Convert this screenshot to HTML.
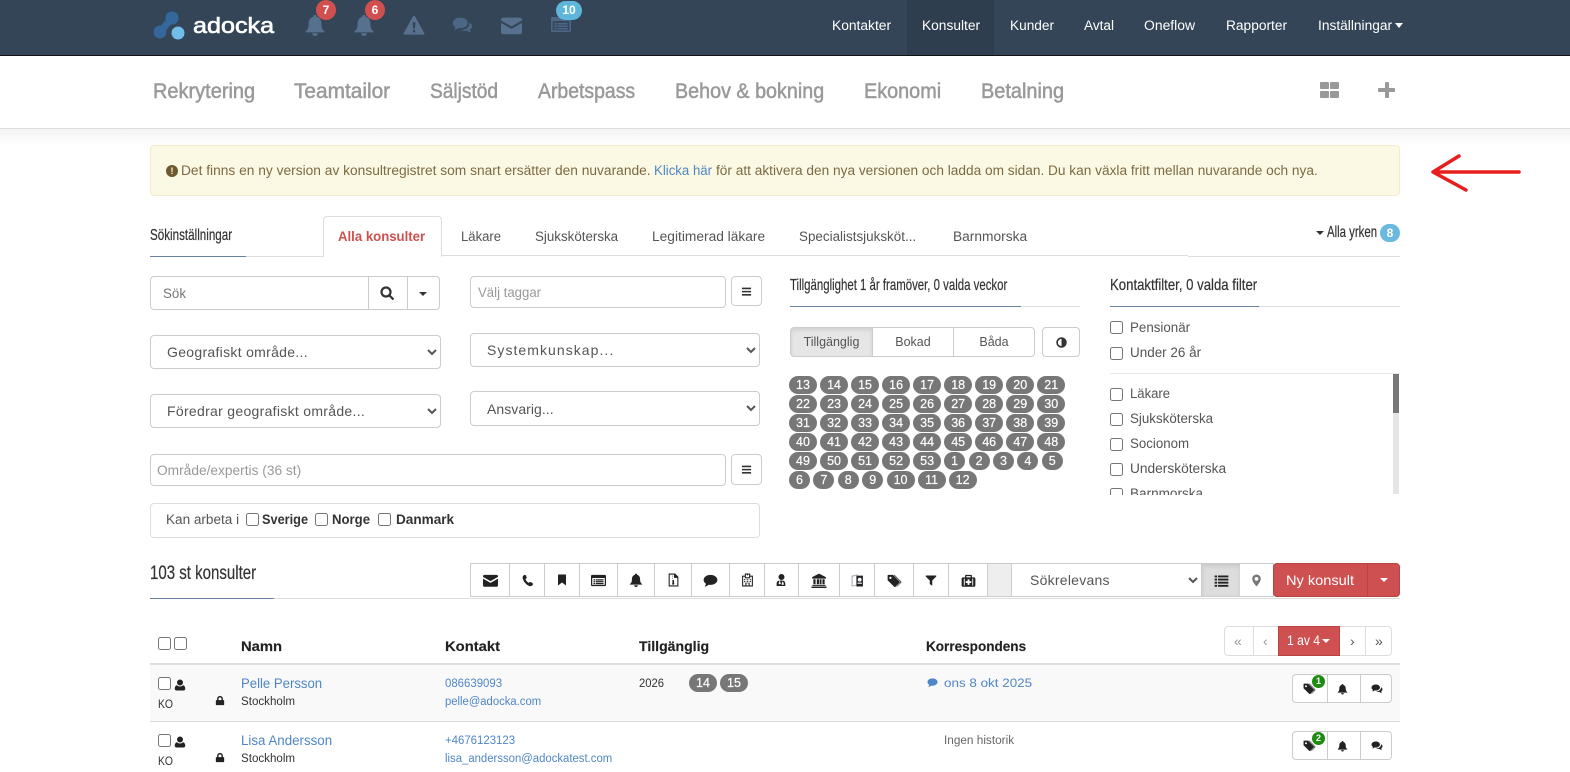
<!DOCTYPE html>
<html lang="sv"><head><meta charset="utf-8"><title>Konsulter</title>
<style>
*{box-sizing:border-box}
html,body{margin:0;padding:0;width:1570px;height:772px;overflow:hidden;background:#fff;font-family:"Liberation Sans",sans-serif;color:#555}
.a{position:absolute}
.t{position:absolute;white-space:nowrap;line-height:20px;height:20px;margin-top:1px;font-size:13.5px;transform-origin:0 50%}
.o{font-family:"Liberation Sans Narrow","Liberation Sans",sans-serif;color:#333;font-size:16px;-webkit-text-stroke:.2px #333}
.n{color:#fff;font-size:13.5px}
.s{color:#999;font-size:21px;-webkit-text-stroke:.5px #999}
.lk{color:#4f86c6}
.b{font-weight:700;color:#222;-webkit-text-stroke:.15px #222}
.box{position:absolute;border:1px solid #ccc;border-radius:4px;background:#fff}
.btn{position:absolute;border:1px solid #ccc;background:#fff;display:flex;align-items:center;justify-content:center}
svg.i{display:block;fill:currentColor}
select{position:absolute;border:1px solid #ccc;border-radius:4px;background:#fff;color:#555;font:14px "Liberation Sans",sans-serif;letter-spacing:.3px;padding:0 12px;margin:0}
input[type=checkbox]{position:absolute;margin:0;width:13px;height:13px}
.chips{position:absolute;display:flex;flex-wrap:wrap;left:789px;top:376px;width:290px}
.c{background:#777;color:#fff;font-size:12.5px;-webkit-text-stroke:.2px #fff;height:18px;line-height:18px;border-radius:10px;text-align:center;width:28px;margin:0 3.04px 1.03px 0}
.c.x{width:21px;margin-right:3.4px}
</style></head><body>
<svg width="0" height="0" style="position:absolute"><defs>
<symbol id="bell" viewBox="0 0 24 24"><path d="M12 1a2 2 0 0 0-2 2.200C6.500 4 5 7 5 11c0 4-1 6.500-3.500 8v1h21v-1C20 17.500 19 15 19 11c0-4-1.500-7-5-7.800A2 2 0 0 0 12 1zM9 21a3 3 0 0 0 6 0z"/></symbol>
<symbol id="warn" viewBox="0 0 24 24"><path fill-rule="evenodd" d="M12 2c.6 0 1 .3 1.300.8l10 18c.4.800-.1 1.700-1 1.700H1.700c-.9 0-1.400-.9-1-1.700l10-18C11 2.300 11.400 2 12 2zM10.500 9l.4 7h2.200l.4-7zM10.700 17.500v2.500h2.600v-2.500z"/></symbol>
<symbol id="coms" viewBox="0 0 24 24"><path d="M9.500 3C14.500 3 18 5.700 18 9s-3.500 6-8.500 6c-.8 0-1.500 0-2.300-.2C6 16 4.300 16.600 2.500 17c.7-1 1.200-2 1.300-3.300C2 12.600 1 10.900 1 9c0-3.300 3.800-6 8.500-6z"/><path d="M20 8.500c1.800 1 3 2.500 3 4.200 0 1.600-.9 3-2.500 4 0 1.300.5 2.300 1.300 3.300-1.800-.3-3.500-1-4.700-2.100-.7.100-1.400.2-2.100.2-1.900 0-3.600-.5-4.900-1.300 5.800.2 10.200-3.200 9.900-8.300z"/></symbol>
<symbol id="com" viewBox="0 0 24 24"><path d="M12 3c6.100 0 11 3.600 11 8s-4.900 8-11 8c-1 0-2-.1-3-.3C7.400 20.300 5 21.300 2.500 21.700c1.200-1.300 2-2.900 2.100-4.700C2.400 15.500 1 13.400 1 11c0-4.400 4.900-8 11-8z"/></symbol>
<symbol id="mail" viewBox="0 0 24 24"><path d="M2.500 3h19C22.900 3 24 4 24 5.500v.6L12 13 0 6.100v-.6C0 4 1.100 3 2.500 3zM0 9l12 6.800L24 9v10.500c0 1.400-1.100 2.500-2.500 2.500h-19C1.100 22 0 20.900 0 19.500z"/></symbol>
<symbol id="lalt" viewBox="0 0 24 24"><path fill-rule="evenodd" d="M2 3h20a2 2 0 0 1 2 2v14a2 2 0 0 1-2 2H2a2 2 0 0 1-2-2V5a2 2 0 0 1 2-2zM2 8v11h20V8zM4 10h3v2H4zM8 10h12v2H8zM4 13h3v2H4zM8 13h12v2H8zM4 16h3v2H4zM8 16h12v2H8z"/></symbol>
<symbol id="phone" viewBox="0 0 24 24"><path d="M6.500 1.500L9 2.300l1.800 5-2.600 2c.8 2.700 3 5.300 5.800 7l2.500-1.800 5 2 .5 3.200c-1 1.800-3 2.800-5 2.800C10.500 21.500 3 13 3 6c0-2 1.500-3.800 3.500-4.500z"/></symbol>
<symbol id="book" viewBox="0 0 24 24"><path d="M4 1h16v22l-8-6-8 6z"/></symbol>
<symbol id="zip" viewBox="0 0 24 24"><path fill-rule="evenodd" d="M3 0h12l6 6v18H3zM5 2v20h14V8h-6V2h-1v2h-2v2h2v2h-2v2h2v2h-2v5.500a2 2 0 1 0 3 0V12h-1v-2h-1V8h1V6h-1V4h1V2z"/></symbol>
<symbol id="hosp" viewBox="0 0 24 24"><path fill-rule="evenodd" d="M7 0h10v4h5v20H2V4h5zM9 2v5h6V2h-2v1.500h-2V2zM4 6v16h4v-5h8v5h4V6h-3v3H7V6zM5.500 10.500v2h2.500v-2zm5 0v2h3v-2zm5.500 0v2h2.500v-2zM5.500 14v2h2.500v-2zm5 0v2h3v-2zm5.500 0v2h2.500v-2zM10 18v4h4v-4z"/></symbol>
<symbol id="doc" viewBox="0 0 24 24"><path fill-rule="evenodd" d="M12 1a5.500 5.500 0 1 1 0 11 5.500 5.500 0 0 1 0-11zM3 23v-4c0-3.500 2-5.500 5-6v3.200a2 2 0 1 0 1.500 0V13h5v2.500c-1.300.4-2 1.500-2 3V21h3.500v-2.500c0-1.500-.7-2.600-2-3V13c3 .5 5 2.500 5 6v4z"/></symbol>
<symbol id="bank" viewBox="0 0 24 24"><path d="M12 1l11 5.500V9H1V6.500zM3 10h3.500v8H3zM8.500 10H12v8H8.500zM13 10h3v8h-3zM17.500 10H21v8h-3.500zM1.500 19h21v1.500h-21zM0 21.500h24V24H0z"/></symbol>
<symbol id="pass" viewBox="0 0 24 24"><path fill="#aab" d="M1 3l11-2v20L1 23zM3 5v16l7-1.300V3z"/><path fill-rule="evenodd" d="M10 3h12v20H10zm6 4a3.500 3.500 0 1 0 0 7 3.500 3.500 0 0 0 0-7zm-4 9v2h8v-2z"/></symbol>
<symbol id="tags" viewBox="0 0 24 24"><path fill-rule="evenodd" d="M1 4a1 1 0 0 1 1-1h7.500L20 13.500a1.500 1.500 0 0 1 0 2L13.500 22a1.500 1.500 0 0 1-2 0L1 11.500zM5.500 6a1.800 1.800 0 1 0 0 3.600 1.800 1.800 0 0 0 0-3.600z"/><path d="M12 3l10.500 10.500a1.500 1.500 0 0 1 0 2L16 22h-1l6-6.500a1.500 1.500 0 0 0 0-2L10.500 3z"/></symbol>
<symbol id="filt" viewBox="0 0 24 24"><path d="M1.500 2h21v2L14.500 12v10.500l-5-3.500v-7L1.500 4z"/></symbol>
<symbol id="med" viewBox="0 0 24 24"><path fill-rule="evenodd" d="M8 3h8a1.500 1.500 0 0 1 1.500 1.500V7h3A2.500 2.500 0 0 1 23 9.500v10a2.500 2.500 0 0 1-2.500 2.500h-17A2.500 2.500 0 0 1 1 19.500v-10A2.500 2.500 0 0 1 3.500 7h3V4.500A1.500 1.500 0 0 1 8 3zM8.500 5v2h7V5zM4.500 9v11h1.500V9zM18 9v11h1.500V9zM10.500 10v3h-3v3h3v3h3v-3h3v-3h-3v-3z"/></symbol>
<symbol id="list" viewBox="0 0 24 24"><path d="M1 4h4v3H1zM6.500 4H23v3H6.500zM1 9h4v3H1zM6.500 9H23v3H6.500zM1 14h4v3H1zM6.500 14H23v3H6.500zM1 19h4v3H1zM6.500 19H23v3H6.500z"/></symbol>
<symbol id="pin" viewBox="0 0 24 24"><path fill-rule="evenodd" d="M12 1a8 8 0 0 0-8 8c0 5 8 14 8 14s8-9 8-14a8 8 0 0 0-8-8zm0 4.500a3.500 3.500 0 1 1 0 7 3.500 3.500 0 0 1 0-7z"/></symbol>
<symbol id="user" viewBox="0 0 24 24"><path d="M12 1a6 6 0 1 1 0 12 6 6 0 0 1 0-12zM6 12.500C7.500 14 9.500 15 12 15s4.500-1 6-2.500c3 .5 4.500 3.500 4.500 7 0 2-1.500 3.500-3.500 3.500H5c-2 0-3.500-1.500-3.500-3.500 0-3.500 1.500-6.500 4.500-7z"/></symbol>
<symbol id="lock" viewBox="0 0 24 24"><path fill-rule="evenodd" d="M12 1a7 7 0 0 1 7 7v3h1.500c.8 0 1.500.7 1.500 1.500v9c0 .8-.7 1.500-1.500 1.500h-17C2.700 23 2 22.300 2 21.500v-9c0-.8.7-1.500 1.500-1.500H5V8a7 7 0 0 1 7-7zM8.500 11h7V8a3.500 3.500 0 0 0-7 0z"/></symbol>
<symbol id="bars" viewBox="0 0 24 24"><path d="M2 3.500h20v3.500H2zM2 10.500h20V14H2zM2 17.500h20V21H2z"/></symbol>
</defs></svg>

<!-- top nav -->
<div class="a" style="left:0;top:0;width:1568px;height:56px;background:#344557;border-bottom:1px solid #111"></div>
<div class="a" style="left:906px;top:0;width:87px;height:55px;background:#2f3e4f"></div>
<svg class="a" style="left:150px;top:8px" width="40" height="34"><path d="M22 10L10 24" stroke="#34689c" stroke-width="7"/><circle cx="22" cy="10" r="6.500" fill="#34689c"/><circle cx="10" cy="24" r="6.500" fill="#34689c"/><circle cx="28" cy="25" r="6.500" fill="#6fbde8"/></svg>
<div class="t" style="left:193px;top:14px;font-size:22px;color:#fff;-webkit-text-stroke:.6px #fff;line-height:22px;height:22px;--w:81">adocka</div>

<svg class="a i" style="left:304px;top:14px;color:#57708e" width="22" height="22"><use href="#bell"/></svg>
<div class="a" style="left:316px;top:0;width:20px;height:20px;border-radius:50%;background:#d14f4f;color:#fff;font:700 12px/20px 'Liberation Sans';text-align:center">7</div>
<svg class="a i" style="left:353px;top:14px;color:#57708e" width="22" height="22"><use href="#bell"/></svg>
<div class="a" style="left:365px;top:0;width:20px;height:20px;border-radius:50%;background:#d14f4f;color:#fff;font:700 12px/20px 'Liberation Sans';text-align:center">6</div>
<svg class="a i" style="left:402px;top:14px;color:#57708e" width="22" height="22"><use href="#warn"/></svg>
<svg class="a i" style="left:451px;top:15px;color:#4c6685" width="21" height="21"><use href="#coms"/></svg>
<svg class="a i" style="left:500px;top:15px;color:#57708e" width="21" height="21"><use href="#mail"/></svg>
<svg class="a i" style="left:550px;top:14px;color:#4c6685" width="20" height="21"><use href="#lalt"/></svg>
<div class="a" style="left:555px;top:1px;width:26px;height:19px;border-radius:10px;background:#5fb6db;color:#fff;font:700 12px/19px 'Liberation Sans';text-align:center">10</div>

<div class="t n" style="left:831px;top:15px;--w:59">Kontakter</div>
<div class="t n" style="left:921px;top:15px;--w:58">Konsulter</div>
<div class="t n" style="left:1009px;top:15px;--w:44">Kunder</div>
<div class="t n" style="left:1083px;top:15px;--w:30">Avtal</div>
<div class="t n" style="left:1143px;top:15px;--w:51">Oneflow</div>
<div class="t n" style="left:1224px;top:15px;--w:61">Rapporter</div>
<div class="t n" style="left:1316px;top:15px;--w:74">Inställningar</div>
<div class="a" style="left:1393px;top:23px;border:4px solid transparent;border-top:5px solid #fff;border-bottom:0"></div>

<!-- sub nav -->
<div class="a" style="left:0;top:56px;width:1568px;height:73px;background:#fff;border-bottom:1px solid #ddd"></div>
<div class="a" style="left:0;top:129px;width:1568px;height:17px;background:linear-gradient(#f3f3f3,#fff)"></div>
<div class="t s" style="left:153px;top:81px;--w:102">Rekrytering</div>
<div class="t s" style="left:294px;top:81px;--w:96">Teamtailor</div>
<div class="t s" style="left:429px;top:81px;--w:68">Säljstöd</div>
<div class="t s" style="left:537px;top:81px;--w:97">Arbetspass</div>
<div class="t s" style="left:674px;top:81px;--w:149">Behov &amp; bokning</div>
<div class="t s" style="left:863px;top:81px;--w:77">Ekonomi</div>
<div class="t s" style="left:980px;top:81px;--w:83">Betalning</div>
<div class="a" style="left:1318px;top:82px;width:9.500px;height:7px;background:#999;border-radius:1px"></div>
<div class="a" style="left:1328px;top:82px;width:9.500px;height:7px;background:#999;border-radius:1px"></div>
<div class="a" style="left:1318px;top:91px;width:9.500px;height:7px;background:#999;border-radius:1px"></div>
<div class="a" style="left:1328px;top:91px;width:9.500px;height:7px;background:#999;border-radius:1px"></div>
<div class="a" style="left:1376px;top:88px;width:17px;height:4px;background:#999;border-radius:1px"></div>
<div class="a" style="left:1383px;top:82px;width:4px;height:16px;background:#999;border-radius:1px"></div>

<!-- alert -->
<div class="a" style="left:150px;top:145px;width:1248px;height:51px;background:#fbf8e3;border:1px solid #f3ebcf;border-radius:4px"></div>
<div class="a" style="left:166px;top:165px;width:12px;height:12px;border-radius:50%;background:#6f5a30;color:#fcf8e3;font:700 9px/12px 'Liberation Sans';text-align:center">!</div>
<div class="t" style="left:181px;top:160px;color:#7d6a45;--w:469">Det finns en ny version av konsultregistret som snart ersätter den nuvarande.</div>
<div class="t lk" style="left:653px;top:160px;--w:58">Klicka här</div>
<div class="t" style="left:715px;top:160px;color:#7d6a45;--w:601">för att aktivera den nya versionen och ladda om sidan. Du kan växla fritt mellan nuvarande och nya.</div>

<svg class="a" style="left:1423px;top:150px" width="100" height="46" fill="none" stroke="#e81e1e" stroke-width="3.500" stroke-linecap="round" stroke-linejoin="round"><path d="M94 22H9M34 6L8 22l33 18"/></svg>

<!-- tabs -->
<div class="t o" style="left:150px;top:225px;--w:82">Sökinställningar</div>
<div class="a" style="left:150px;top:256px;width:173px;height:1px;background:#ddd"></div>
<div class="a" style="left:150px;top:256px;width:96px;height:1px;background:#6b83a3"></div>
<div class="a" style="left:441px;top:255px;width:745px;height:1px;background:#ddd"></div>
<div class="a" style="left:1186px;top:256px;width:212px;height:1px;background:#ddd"></div>
<div class="a" style="left:323px;top:216px;width:118px;height:41px;background:#fff;border:1px solid #ddd;border-bottom:0;border-radius:4px 4px 0 0"></div>
<div class="t" style="left:338px;top:226px;color:#d14f4f;font-weight:700;--w:87">Alla konsulter</div>
<div class="t" style="left:460px;top:226px;--w:40">Läkare</div>
<div class="t" style="left:534px;top:226px;--w:83">Sjuksköterska</div>
<div class="t" style="left:651px;top:226px;--w:113">Legitimerad läkare</div>
<div class="t" style="left:798px;top:226px;--w:117">Specialistsjuksköt...</div>
<div class="t" style="left:952px;top:226px;--w:74">Barnmorska</div>
<div class="a" style="left:1314px;top:231px;border:4px solid transparent;border-top:4px solid #333;border-bottom:0"></div>
<div class="t o" style="left:1325px;top:222px;--w:50">Alla yrken</div>
<div class="a" style="left:1378px;top:224px;width:20px;height:18px;border-radius:10px;background:#6bb9de;color:#fff;font:700 12px/18px 'Liberation Sans';text-align:center">8</div>

<!-- search form -->
<div class="box" style="left:150px;top:276px;width:289px;height:34px"></div>
<div class="a" style="left:368px;top:277px;width:1px;height:32px;background:#ccc"></div>
<div class="a" style="left:406px;top:277px;width:1px;height:32px;background:#ccc"></div>
<div class="t" style="left:163px;top:282px;font-size:14px;color:#777;--w:23">Sök</div>
<svg class="a" style="left:380px;top:286px" width="14" height="14" fill="none" stroke="#333" stroke-width="2.200"><circle cx="6" cy="6" r="4.500"/><path d="M9.500 9.500L13.500 13.500"/></svg>
<div class="a" style="left:418px;top:292px;border:4px solid transparent;border-top:4px solid #333;border-bottom:0"></div>

<div class="box" style="left:469.500px;top:276px;width:255.500px;height:32px"></div>
<div class="t" style="left:477px;top:282px;color:#999;--w:63">Välj taggar</div>
<div class="btn" style="left:730px;top:276px;width:31px;height:30px;border-radius:4px;color:#333"><svg class="i" width="11" height="11"><use href="#bars"/></svg></div>

<select style="left:150px;top:335px;width:290px;height:34px"><option>Geografiskt område...</option></select>
<select style="left:469.500px;top:333px;width:289.500px;height:34px;letter-spacing:1.05px"><option>Systemkunskap...</option></select>
<select style="left:150px;top:393px;width:290px;height:34px"><option>Föredrar geografiskt område...</option></select>
<select style="left:469.500px;top:391px;width:289.500px;height:34px;letter-spacing:.05px"><option>Ansvarig...</option></select>

<div class="box" style="left:150px;top:453px;width:575px;height:32px"></div>
<div class="t" style="left:157px;top:459px;color:#999;--w:144">Område/expertis (36 st)</div>
<div class="btn" style="left:730px;top:453px;width:31px;height:31px;border-radius:4px;color:#333"><svg class="i" width="11" height="11"><use href="#bars"/></svg></div>

<div class="box" style="left:150px;top:502px;width:609px;height:35px;border-color:#ddd"></div>
<div class="t" style="left:166px;top:508px;--w:73">Kan arbeta i</div>
<input type="checkbox" style="left:246px;top:512px">
<div class="t" style="left:262px;top:508px;font-weight:700;color:#333;--w:46">Sverige</div>
<input type="checkbox" style="left:315px;top:512px">
<div class="t" style="left:332px;top:508px;font-weight:700;color:#333;--w:38">Norge</div>
<input type="checkbox" style="left:378px;top:512px">
<div class="t" style="left:395px;top:508px;font-weight:700;color:#333;--w:58">Danmark</div>

<!-- availability -->
<div class="t o" style="left:789px;top:275px;--w:217">Tillgänglighet 1 år framöver, 0 valda veckor</div>
<div class="a" style="left:789px;top:306px;width:290px;height:1px;background:#ddd"></div>
<div class="a" style="left:789px;top:306px;width:231px;height:1px;background:#6b83a3"></div>
<div class="btn" style="left:789px;top:327px;width:83px;height:30px;background:#e6e6e6;border-radius:4px 0 0 4px;box-shadow:inset 0 2px 4px rgba(0,0,0,.1);color:#555;font-size:12.5px">Tillgänglig</div>
<div class="btn" style="left:871px;top:327px;width:82px;height:30px;color:#555;font-size:12.5px">Bokad</div>
<div class="btn" style="left:952px;top:327px;width:82px;height:30px;border-radius:0 4px 4px 0;color:#555;font-size:12.5px">Båda</div>
<div class="btn" style="left:1041px;top:327px;width:38px;height:30px;border-radius:4px"><svg width="11" height="11" viewBox="0 0 12 12"><circle cx="6" cy="6" r="4.800" fill="#fff" stroke="#333" stroke-width="1.800"/><path d="M6 1a5 5 0 0 1 0 10z" fill="#333"/></svg></div>

<div class="chips">
<div class="c">13</div><div class="c">14</div><div class="c">15</div><div class="c">16</div><div class="c">17</div><div class="c">18</div><div class="c">19</div><div class="c">20</div><div class="c">21</div>
<div class="c">22</div><div class="c">23</div><div class="c">24</div><div class="c">25</div><div class="c">26</div><div class="c">27</div><div class="c">28</div><div class="c">29</div><div class="c">30</div>
<div class="c">31</div><div class="c">32</div><div class="c">33</div><div class="c">34</div><div class="c">35</div><div class="c">36</div><div class="c">37</div><div class="c">38</div><div class="c">39</div>
<div class="c">40</div><div class="c">41</div><div class="c">42</div><div class="c">43</div><div class="c">44</div><div class="c">45</div><div class="c">46</div><div class="c">47</div><div class="c">48</div>
<div class="c">49</div><div class="c">50</div><div class="c">51</div><div class="c">52</div><div class="c">53</div><div class="c x">1</div><div class="c x">2</div><div class="c x">3</div><div class="c x">4</div><div class="c x">5</div>
<div style="width:100%;height:0"></div>
<div class="c x">6</div><div class="c x">7</div><div class="c x">8</div><div class="c x">9</div><div class="c">10</div><div class="c">11</div><div class="c">12</div>
</div>

<!-- contact filter -->
<div class="t o" style="left:1109px;top:275px;--w:147">Kontaktfilter, 0 valda filter</div>
<div class="a" style="left:1109px;top:306px;width:289px;height:1px;background:#ddd"></div>
<div class="a" style="left:1109px;top:306px;width:148px;height:1px;background:#6b83a3"></div>
<input type="checkbox" style="left:1109px;top:321px">
<div class="t" style="left:1129px;top:317px;--w:60">Pensionär</div>
<input type="checkbox" style="left:1109px;top:347px">
<div class="t" style="left:1129px;top:342px;--w:71">Under 26 år</div>
<div class="a" style="left:1109px;top:373px;width:289px;height:1px;background:#e8e8e8"></div>
<div class="a" style="left:1109px;top:374px;width:289px;height:120px;overflow:hidden">
 <div class="a" style="left:283px;top:0;width:6px;height:120px;background:#e6e6e6"></div>
 <div class="a" style="left:283px;top:0;width:6px;height:39px;background:#777"></div>
 <input type="checkbox" style="left:0;top:14px"><div class="t" style="left:20px;top:9px;--w:40">Läkare</div>
 <input type="checkbox" style="left:0;top:39px"><div class="t" style="left:20px;top:34px;--w:83">Sjuksköterska</div>
 <input type="checkbox" style="left:0;top:64px"><div class="t" style="left:20px;top:59px;--w:59">Socionom</div>
 <input type="checkbox" style="left:0;top:89px"><div class="t" style="left:20px;top:84px;--w:96">Undersköterska</div>
 <input type="checkbox" style="left:0;top:114px"><div class="t" style="left:20px;top:109px;--w:73">Barnmorska</div>
</div>

<!-- toolbar -->
<div class="t o" style="left:150px;top:562px;font-size:19px;--w:106">103 st konsulter</div>
<div class="a" style="left:150px;top:597px;width:1248px;height:1px;background:#ddd"></div>
<div class="a" style="left:150px;top:597px;width:124px;height:1px;background:#6b83a3"></div>
<div class="a" style="left:469.500px;top:562px;width:801.500px;height:34px;border:1px solid #ccc;background:#fff"></div>
<div class="a" style="left:986px;top:563px;width:25px;height:32px;background:#eee"></div>

<div class="btn" style="left:469.500px;top:562px;width:39.500px;height:34px;color:#222"><svg class="i" width="15" height="15"><use href="#mail"/></svg></div>
<div class="btn" style="left:508px;top:562px;width:36px;height:34px;color:#222"><svg class="i" width="13" height="13"><use href="#phone"/></svg></div>
<div class="btn" style="left:543px;top:562px;width:36px;height:34px;color:#222"><svg class="i" width="12" height="12"><use href="#book"/></svg></div>
<div class="btn" style="left:578px;top:562px;width:39px;height:34px;color:#222"><svg class="i" width="15" height="15"><use href="#lalt"/></svg></div>
<div class="btn" style="left:616px;top:562px;width:38px;height:34px;color:#222"><svg class="i" width="14" height="14"><use href="#bell"/></svg></div>
<div class="btn" style="left:653px;top:562px;width:38px;height:34px;color:#222"><svg class="i" width="13" height="14"><use href="#zip"/></svg></div>
<div class="btn" style="left:690px;top:562px;width:39px;height:34px;color:#222"><svg class="i" width="15" height="15"><use href="#com"/></svg></div>
<div class="btn" style="left:728px;top:562px;width:36px;height:34px;color:#222"><svg class="i" width="13" height="14"><use href="#hosp"/></svg></div>
<div class="btn" style="left:763px;top:562px;width:35px;height:34px;color:#222"><svg class="i" width="13" height="14"><use href="#doc"/></svg></div>
<div class="btn" style="left:797px;top:562px;width:42px;height:34px;color:#222"><svg class="i" width="16" height="15"><use href="#bank"/></svg></div>
<div class="btn" style="left:838px;top:562px;width:36px;height:34px;color:#222"><svg class="i" width="13" height="15"><use href="#pass"/></svg></div>
<div class="btn" style="left:873px;top:562px;width:40px;height:34px;color:#222"><svg class="i" width="15" height="15"><use href="#tags"/></svg></div>
<div class="btn" style="left:912px;top:562px;width:36px;height:34px;color:#222"><svg class="i" width="12" height="13"><use href="#filt"/></svg></div>
<div class="btn" style="left:947px;top:562px;width:40px;height:34px;color:#222"><svg class="i" width="15" height="15"><use href="#med"/></svg></div>

<select style="left:1010px;top:562px;width:190px;height:34px;border-radius:0;padding-left:14px;letter-spacing:.25px"><option>Sökrelevans</option></select>
<div class="btn" style="left:1199px;top:562px;width:40px;height:34px;background:#ddd;box-shadow:inset 0 2px 4px rgba(0,0,0,.1);color:#222"><svg class="i" width="15" height="15"><use href="#list"/></svg></div>
<div class="btn" style="left:1238px;top:562px;width:34px;height:34px;color:#777;border-left:0"><svg class="i" width="13" height="13"><use href="#pin"/></svg></div>
<div class="a" style="left:1271px;top:562px;width:95px;height:34px;background:#cf5050;border:1px solid #b84343;border-radius:4px 0 0 4px"></div>
<div class="a" style="left:1365px;top:562px;width:33px;height:34px;background:#cf5050;border:1px solid #b84343;border-radius:0 4px 4px 0"></div>
<div class="t" style="left:1284px;top:568px;color:#fff;font-size:14px;--w:68">Ny konsult</div>
<div class="a" style="left:1378px;top:577px;border:4px solid transparent;border-top:4px solid #fff;border-bottom:0"></div>

<!-- pagination -->
<div class="a" style="left:1222px;top:625px;width:168px;height:30px;border:1px solid #ddd;border-radius:4px;background:#fff"></div>
<div class="a" style="left:1251px;top:625px;width:1px;height:30px;background:#ddd"></div>
<div class="a" style="left:1363px;top:625px;width:1px;height:30px;background:#ddd"></div>
<div class="a" style="left:1276px;top:625px;width:62px;height:30px;background:#cf5050;border:1px solid #b84343"></div>
<div class="t" style="left:1232px;top:629px;color:#999;font-size:14px">«</div>
<div class="t" style="left:1261px;top:629px;color:#999;font-size:14px">‹</div>
<div class="t" style="left:1285px;top:629px;color:#fff;--w:33">1 av 4</div>
<div class="a" style="left:1320px;top:638px;border:4px solid transparent;border-top:4px solid #fff;border-bottom:0"></div>
<div class="t" style="left:1348px;top:629px;color:#555;font-size:14px">›</div>
<div class="t" style="left:1373px;top:629px;color:#555;font-size:14px">»</div>

<!-- table head -->
<input type="checkbox" style="left:158px;top:636px">
<input type="checkbox" style="left:174px;top:636px">
<div class="t b" style="left:241px;top:635px;--w:41">Namn</div>
<div class="t b" style="left:444px;top:635px;--w:55">Kontakt</div>
<div class="t b" style="left:638px;top:635px;--w:70">Tillgänglig</div>
<div class="t b" style="left:925px;top:635px;--w:100">Korrespondens</div>
<div class="a" style="left:150px;top:662px;width:1248px;height:2px;background:#ddd"></div>

<!-- row 1 -->
<div class="a" style="left:150px;top:664px;width:1248px;height:56px;background:#f9f9f9"></div>
<div class="a" style="left:150px;top:720px;width:1248px;height:1px;background:#ddd"></div>
<input type="checkbox" style="left:158px;top:676px">
<svg class="a i" style="left:174px;top:678px;color:#222" width="12" height="12"><use href="#user"/></svg>
<div class="t" style="left:158px;top:693px;font-size:11.500px;color:#333;--w:15">KO</div>
<svg class="a i" style="left:215px;top:694px;color:#222" width="10" height="11"><use href="#lock"/></svg>
<div class="t lk" style="left:241px;top:672px;--w:81">Pelle Persson</div>
<div class="t" style="left:241px;top:690px;font-size:11.500px;color:#333;--w:54">Stockholm</div>
<div class="t lk" style="left:444px;top:672px;font-size:11.500px;--w:57">086639093</div>
<div class="t lk" style="left:444px;top:690px;font-size:11.500px;--w:96">pelle@adocka.com</div>
<div class="t" style="left:638px;top:672px;font-size:11.500px;color:#333;--w:25">2026</div>
<div class="c a" style="left:688px;top:673px">14</div>
<div class="c a" style="left:719px;top:673px">15</div>
<svg class="a i" style="left:926px;top:676px;color:#4f86c6" width="11" height="11"><use href="#com"/></svg>
<div class="t lk" style="left:943px;top:672px;font-size:11.500px;--w:88">ons 8 okt 2025</div>

<div class="a" style="left:1290px;top:673px;width:100px;height:29px;border:1px solid #ccc;border-radius:4px;background:#fff"></div>
<div class="a" style="left:1325px;top:674px;width:1px;height:27px;background:#ccc"></div>
<div class="a" style="left:1358px;top:674px;width:1px;height:27px;background:#ccc"></div>
<svg class="a i" style="left:1301px;top:681px;color:#222" width="13" height="13"><use href="#tags"/></svg>
<div class="a" style="left:1310px;top:674px;width:13px;height:13px;border-radius:50%;background:#1d8a10;color:#fff;font:700 9px/13px 'Liberation Sans';text-align:center">1</div>
<svg class="a i" style="left:1335px;top:682px;color:#222" width="11" height="12"><use href="#bell"/></svg>
<svg class="a i" style="left:1369px;top:682px;color:#222" width="12" height="12"><use href="#coms"/></svg>

<!-- row 2 -->
<input type="checkbox" style="left:158px;top:733px">
<svg class="a i" style="left:174px;top:735px;color:#222" width="12" height="12"><use href="#user"/></svg>
<div class="t" style="left:158px;top:750px;font-size:11.500px;color:#333;--w:15">KO</div>
<svg class="a i" style="left:215px;top:751px;color:#222" width="10" height="11"><use href="#lock"/></svg>
<div class="t lk" style="left:241px;top:729px;--w:91">Lisa Andersson</div>
<div class="t" style="left:241px;top:747px;font-size:11.500px;color:#333;--w:54">Stockholm</div>
<div class="t lk" style="left:444px;top:729px;font-size:11.500px;--w:70">+4676123123</div>
<div class="t lk" style="left:444px;top:747px;font-size:11.500px;--w:167">lisa_andersson@adockatest.com</div>
<div class="t" style="left:943px;top:729px;font-size:11.500px;color:#666;--w:70">Ingen historik</div>
<div class="a" style="left:1290px;top:730px;width:100px;height:29px;border:1px solid #ccc;border-radius:4px;background:#fff"></div>
<div class="a" style="left:1325px;top:731px;width:1px;height:27px;background:#ccc"></div>
<div class="a" style="left:1358px;top:731px;width:1px;height:27px;background:#ccc"></div>
<svg class="a i" style="left:1301px;top:738px;color:#222" width="13" height="13"><use href="#tags"/></svg>
<div class="a" style="left:1310px;top:731px;width:13px;height:13px;border-radius:50%;background:#1d8a10;color:#fff;font:700 9px/13px 'Liberation Sans';text-align:center">2</div>
<svg class="a i" style="left:1335px;top:739px;color:#222" width="11" height="12"><use href="#bell"/></svg>
<svg class="a i" style="left:1369px;top:739px;color:#222" width="12" height="12"><use href="#coms"/></svg>

<script>
var k=1570/1568,R=Math.round;
Array.prototype.forEach.call(document.body.children,function(e){
  if(e.tagName==='SCRIPT'||!e.style.left)return;
  var l=parseFloat(e.style.left)||0,t=parseFloat(e.style.top)||0,w=parseFloat(e.style.width),h=parseFloat(e.style.height);
  e.style.left=R(l*k)+'px';e.style.top=R(t*k)+'px';
  if(w)e.style.width=(R((l+w)*k)-R(l*k))+'px';
  if(h)e.style.height=(R((t+h)*k)-R(t*k))+'px';
});
document.querySelectorAll('.t').forEach(function(e){
  var w=parseFloat(e.style.getPropertyValue('--w'));
  if(!w)return;
  var m=e.getBoundingClientRect().width;
  if(m>0)e.style.transform='scaleX('+(w*k/m)+')';
});
</script>
</body></html>
